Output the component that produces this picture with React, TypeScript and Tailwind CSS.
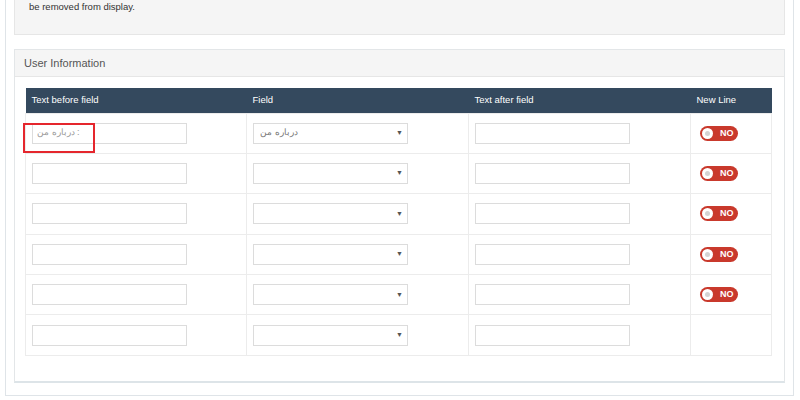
const rows = [
  { before: ': درباره من', field: 'درباره من', toggle: true, highlight: true },
  { before: '', field: '', toggle: true },
  { before: '', field: '', toggle: true },
  { before: '', field: '', toggle: true },
  { before: '', field: '', toggle: true },
  { before: '', field: '', toggle: false },
]

function Toggle() {
  return (
    <div className="relative flex h-[15px] w-[38px] items-center rounded-full bg-[#c9392c]">
      <div className="ml-[2px] flex h-[11px] w-[11px] items-center justify-center rounded-full bg-white">
        <div className="h-[5px] w-[5px] rounded-full bg-[#d4d4d4]" />
      </div>
      <span className="ml-[7px] text-[9px] font-bold leading-none text-white">NO</span>
    </div>
  )
}

function TextBox({ placeholder }: { placeholder?: string }) {
  return (
    <div
      dir="rtl"
      className="flex h-[21px] w-[155px] items-center justify-end border border-[#dcdcdc] bg-white px-[4px] text-[9px] text-[#999]"
    >
      {placeholder}
    </div>
  )
}

function SelectBox({ value }: { value?: string }) {
  return (
    <div className="flex h-[21px] w-[155px] items-center justify-between border border-[#dcdcdc] bg-white pl-[6px] pr-[4px] text-[9px] text-[#777]">
      <span dir="rtl">{value}</span>
      <span className="text-[7px] text-[#555]">▼</span>
    </div>
  )
}

export default function App() {
  return (
    <div className="h-[400px] w-[800px] overflow-hidden bg-white font-['Liberation_Sans','Noto_Sans',sans-serif]">
      <div className="ml-[5px] h-[396px] w-[789px] border-x border-b border-[#dfe4e8] px-[8px]">
        <div className="h-[35px] border-x border-b border-[#e6e6e6] bg-[#f5f5f5] pl-[14px] text-[9.5px] leading-[14px] text-[#333]">
          be removed from display.
        </div>

        <div className="mt-[14px] border border-b-2 border-[#e3e6e8] border-b-[#dde4e8]">
          <div className="flex h-[27px] items-center border-b border-[#e6e6e6] bg-[#f5f5f5] px-[9px] text-[11px] text-[#555]">
            User Information
          </div>
          <div className="px-[10px] pb-[25px] pt-[11px]">
            <table className="w-[746px] table-fixed border-collapse">
              <thead>
                <tr className="h-[25px] bg-[#34495e] text-left text-[9.5px] text-white">
                  <th className="w-[221px] pl-[6px] font-normal">Text before field</th>
                  <th className="w-[222px] pl-[6px] font-normal">Field</th>
                  <th className="w-[222px] pl-[6px] font-normal">Text after field</th>
                  <th className="w-[81px] pl-[6px] font-normal">New Line</th>
                </tr>
              </thead>
              <tbody>
                {rows.map((r, i) => (
                  <tr key={i} className="h-[40.4px]">
                    <td className="relative border border-[#ececec] pl-[6px]">
                      <TextBox placeholder={r.before} />
                      {r.highlight && (
                        <div className="absolute left-[-3px] top-[9px] h-[30px] w-[72px] border-2 border-[#e5262d]" />
                      )}
                    </td>
                    <td className="border border-[#ececec] pl-[6px]">
                      <SelectBox value={r.field} />
                    </td>
                    <td className="border border-[#ececec] pl-[6px]">
                      <TextBox />
                    </td>
                    <td className="border border-[#ececec] pl-[9px]">{r.toggle && <Toggle />}</td>
                  </tr>
                ))}
              </tbody>
            </table>
          </div>
        </div>
      </div>
    </div>
  )
}
